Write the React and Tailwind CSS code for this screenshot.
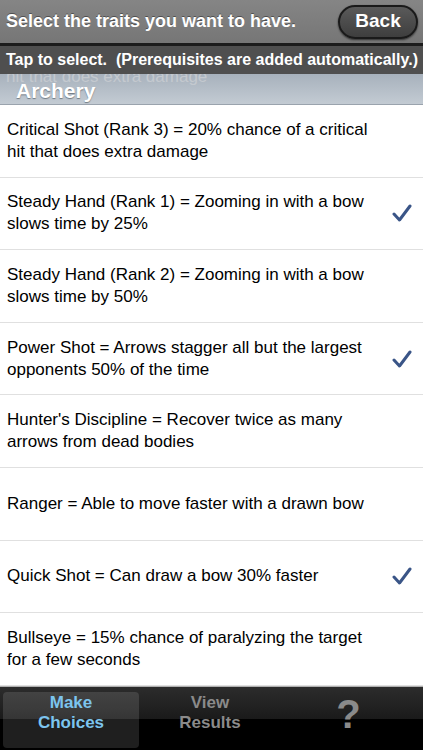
const ROWS = [
  { text: 'Critical Shot (Rank 3) = 20% chance of a critical hit that does extra damage', checked: false },
  { text: 'Steady Hand (Rank 1) = Zooming in with a bow slows time by 25%', checked: true },
  { text: 'Steady Hand (Rank 2) = Zooming in with a bow slows time by 50%', checked: false },
  { text: 'Power Shot = Arrows stagger all but the largest opponents 50% of the time', checked: true },
  { text: "Hunter's Discipline = Recover twice as many arrows from dead bodies", checked: false },
  { text: 'Ranger = Able to move faster with a drawn bow', checked: false },
  { text: 'Quick Shot = Can draw a bow 30% faster', checked: true },
  { text: 'Bullseye = 15% chance of paralyzing the target for a few seconds', checked: false },
]

function Check() {
  return (
    <svg width="20" height="18" viewBox="0 0 20 18">
      <path d="M2 10 L7.5 16 L18 2" fill="none" stroke="#3a5587" strokeWidth="3" strokeLinecap="round" strokeLinejoin="round" />
    </svg>
  )
}

export default function App() {
  return (
    <div className="w-[423px] h-[750px] flex flex-col bg-white overflow-hidden" style={{ fontFamily: '"Liberation Sans", Arial, sans-serif' }}>
      {/* Title bar */}
      <div className="h-[43px] shrink-0 flex items-center justify-between pl-[6px] pr-[5px] bg-gradient-to-b from-[#858585] to-[#767676]">
        <span className="text-white font-bold text-[18px] [text-shadow:0_-1px_0_rgba(0,0,0,0.4)]">Select the traits you want to have.</span>
        <button className="w-[80px] h-[34px] rounded-full border-2 border-[#1a1a1a] bg-gradient-to-b from-[#5a5a5a] to-[#3e3e3e] text-white font-bold text-[19px] flex items-center justify-center shadow-[0_1px_2px_rgba(0,0,0,0.6)]">
          Back
        </button>
      </div>
      <div className="h-[3px] shrink-0 bg-[#1c1c1c]" />
      {/* Subtitle bar */}
      <div className="h-[28px] shrink-0 flex items-center pl-[6px] bg-[#4f4f4f]">
        <span className="text-white font-bold text-[16px] whitespace-nowrap">Tap to select.&nbsp; (Prerequisites are added automatically.)</span>
      </div>
      {/* Section header, scrolled text shows faintly through it */}
      <div className="relative h-[31px] shrink-0 overflow-hidden bg-gradient-to-b from-[#a7b1bc] to-[#c3cbd3] border-b border-[#9aa3ad]">
        <span className="absolute left-[6px] top-[-8px] text-[17px] leading-[22px] text-[#c4c9cf]">hit that does extra damage</span>
        <span className="absolute left-[16px] top-[1px] text-white font-bold text-[21px] [text-shadow:0_1px_1px_rgba(60,70,80,0.6)]">Archery</span>
      </div>
      {/* Rows */}
      <div className="flex-1 flex flex-col">
        {ROWS.map((row, i) => (
          <div key={i} className="h-[72.6px] shrink-0 flex items-center pl-[7px] pr-[11px] border-b border-[#e0e0e0]">
            <p className="flex-1 text-[17px] leading-[22px] text-black pr-[8px]">{row.text}</p>
            <div className="w-[20px] flex justify-center">{row.checked && <Check />}</div>
          </div>
        ))}
      </div>
      {/* Tab bar */}
      <div className="h-[66px] shrink-0 border-t border-[#b0b0b0] bg-[linear-gradient(to_bottom,#2c2c2c_0%,#1a1a1a_50%,#000_50%,#000_100%)] flex items-stretch px-[3px] pt-[5px] pb-[4px]">
        <div className="w-[136px] rounded-[4px] bg-[rgba(255,255,255,0.12)] flex flex-col items-center pt-[1px] leading-[20px] font-bold text-[17px] text-[#7cc4ee]">
          <span>Make</span>
          <span>Choices</span>
        </div>
        <div className="w-[142px] flex flex-col items-center pt-[1px] leading-[20px] font-bold text-[17px] text-[#8a8a8a]">
          <span>View</span>
          <span>Results</span>
        </div>
        <div className="flex-1 flex justify-center pt-[2px]">
          <span className="font-bold text-[40px] text-[#8a8a8a] leading-none -ml-[4px]">?</span>
        </div>
      </div>
    </div>
  )
}
